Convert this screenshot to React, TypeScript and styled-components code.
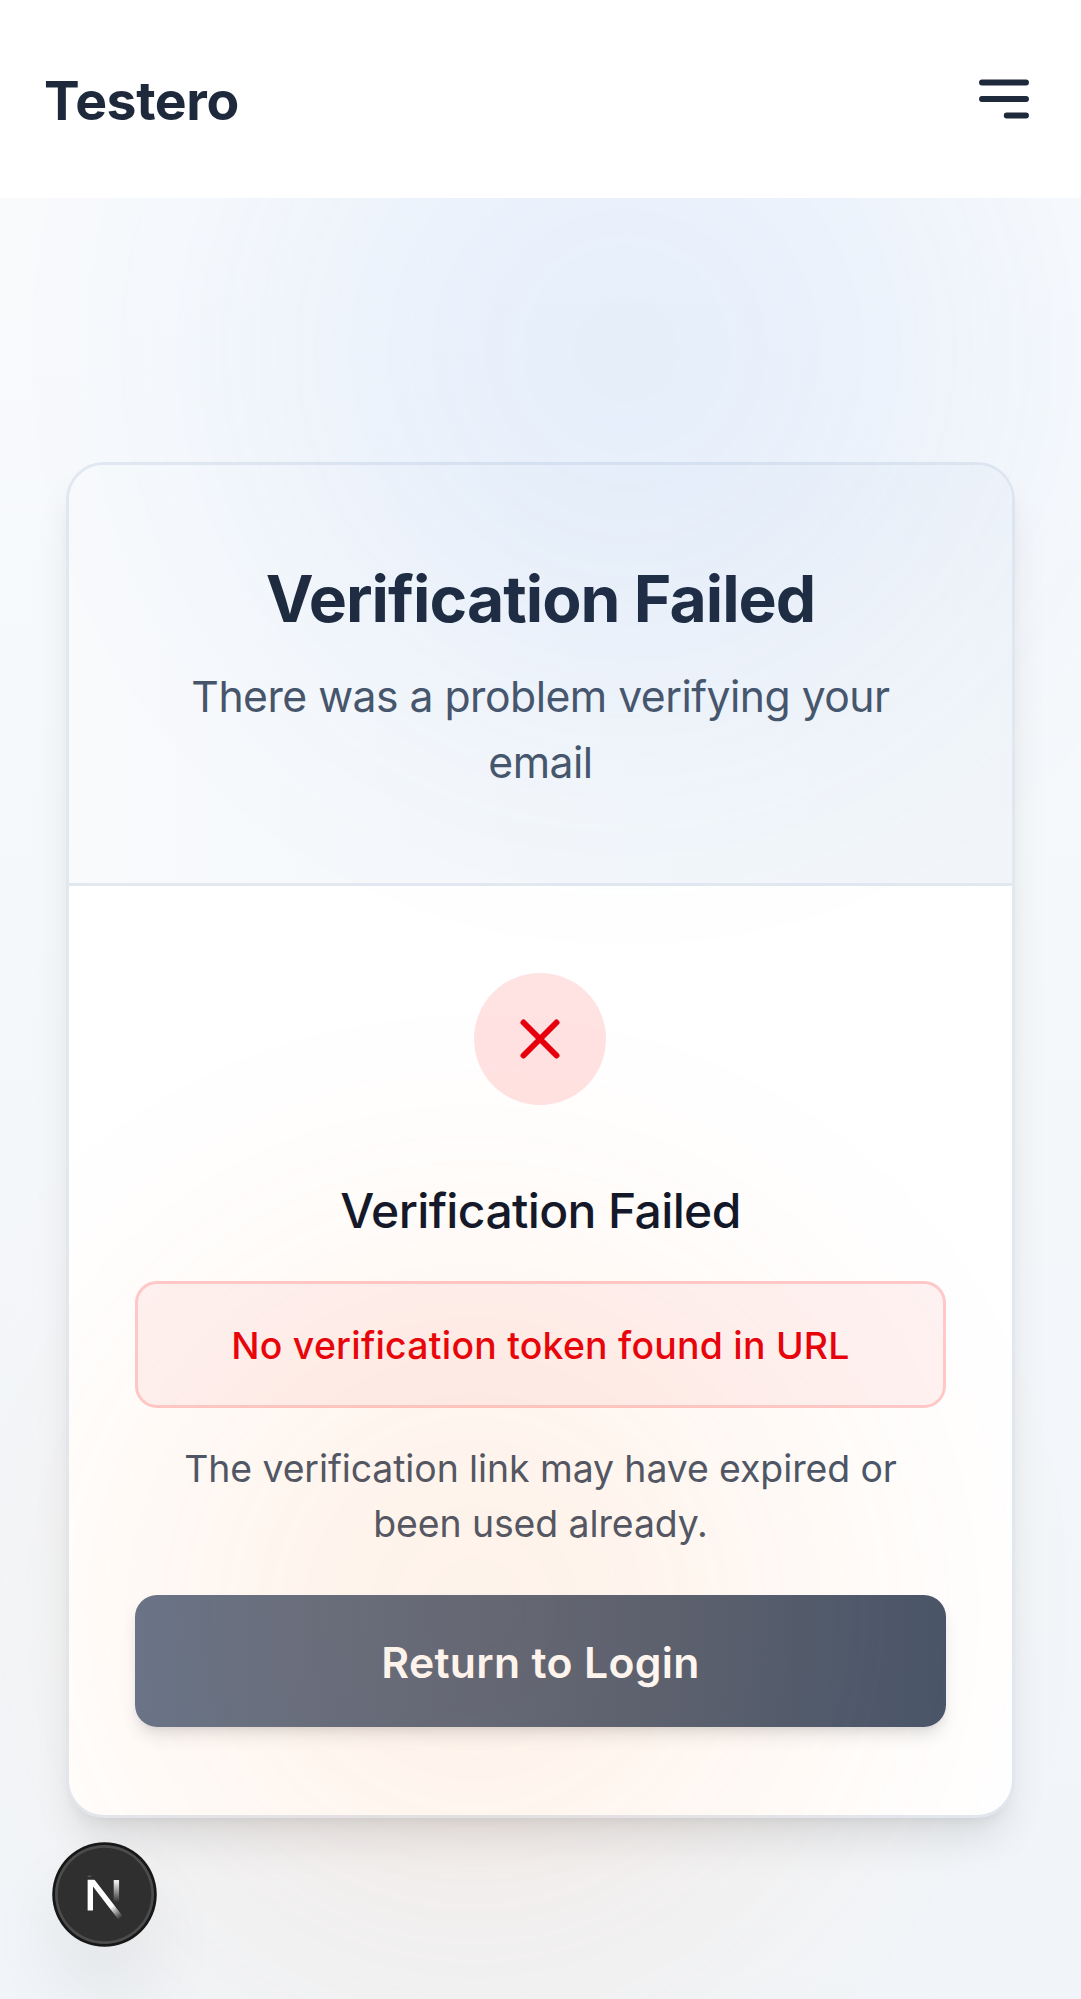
import React from "react";
import styled, { createGlobalStyle } from "styled-components";

const GlobalStyle = createGlobalStyle`
  *, *::before, *::after { box-sizing: border-box; }
  body {
    margin: 0;
    font-family: Inter, "Liberation Sans", sans-serif;
    background: #f8fafc;
    -webkit-font-smoothing: antialiased;
  }
  h1, h2, p { margin: 0; }
`;

const Page = styled.div`
  position: relative;
  min-height: 1999px;
  display: flex;
  flex-direction: column;
  overflow: hidden;
`;

const Nav = styled.header`
  position: relative;
  z-index: 2;
  height: 198px;
  padding: 0 44px;
  display: flex;
  align-items: center;
  justify-content: space-between;
  background: #ffffff;
`;

const Brand = styled.a`
  padding-top: 3px;
  font-size: 53.5px;
  line-height: 77px;
  font-weight: 700;
  letter-spacing: -0.4px;
  color: #1e293b;
  text-decoration: none;
`;

const MenuButton = styled.button`
  display: flex;
  padding: 0;
  border: 0;
  background: none;
  color: #1e293b;
`;

const Icon = styled.svg`
  width: 66px;
  height: 66px;
  fill: none;
  stroke: currentColor;
  stroke-width: 2.15;
  stroke-linecap: round;
  stroke-linejoin: round;
`;

const Main = styled.main`
  flex: 1;
  padding: 264px 66px 181px;
  background: linear-gradient(to bottom, #f8fafc, #f1f5f9);
`;

const Card = styled.section`
  border: 3px solid #e2e8f0;
  border-radius: 38px;
  overflow: hidden;
  background: #ffffff;
  text-align: center;
  box-shadow: 0 27.5px 41px -8px rgba(0, 0, 0, 0.1), 0 11px 16.5px -11px rgba(0, 0, 0, 0.1);
`;

const CardHeader = styled.div`
  height: 421px;
  padding: 88px 66px 0;
  border-bottom: 3px solid #e2e8f0;
  background: linear-gradient(to right, #f8fafc, #f1f5f9);
`;

const CardTitle = styled.h1`
  font-size: 64.2px;
  line-height: 91px;
  font-weight: 700;
  letter-spacing: -0.97px;
  color: #1e293b;
`;

const CardDescription = styled.p`
  margin-top: 20px;
  font-size: 42.7px;
  line-height: 66px;
  letter-spacing: -0.52px;
  color: #475569;
`;

const CardBody = styled.div`
  padding: 87px 66px 88px;
  display: flex;
  flex-direction: column;
  align-items: center;
`;

const StatusBadge = styled.div`
  width: 132px;
  height: 132px;
  margin-right: 1px;
  display: grid;
  place-items: center;
  border-radius: 50%;
  background: #ffe2e2;
  color: #e7000b;
`;

const StatusTitle = styled.h2`
  margin-top: 67px;
  font-size: 48px;
  line-height: 77px;
  font-weight: 500;
  letter-spacing: -0.63px;
  color: #0f172a;
`;

const Alert = styled.div`
  width: 100%;
  height: 127px;
  margin-top: 32px;
  padding-top: 2px;
  display: grid;
  place-items: center;
  border: 3px solid #ffc9c9;
  border-radius: 22px;
  background: #fef2f2;
  font-size: 37.4px;
  font-weight: 500;
  letter-spacing: 0.24px;
  color: #e7000b;
`;

const Note = styled.p`
  margin-top: 33px;
  font-size: 37.4px;
  line-height: 55px;
  letter-spacing: -0.08px;
  color: #475569;
`;

const PrimaryButton = styled.button`
  width: 100%;
  height: 132px;
  margin-top: 44px;
  padding: 3px 0 0;
  border: 0;
  border-radius: 22px;
  background: linear-gradient(to right, #64748b, #475569);
  box-shadow: 0 11px 16.5px -2.75px rgba(0, 0, 0, 0.1), 0 5.5px 11px -5.5px rgba(0, 0, 0, 0.1);
  font: 600 42.7px Inter, "Liberation Sans", sans-serif;
  letter-spacing: 0.33px;
  color: #ffffff;
`;

const Glow = styled.div<{ $x: number; $y: number; $color: string }>`
  position: absolute;
  left: ${(p) => p.$x - 352}px;
  top: ${(p) => p.$y - 352}px;
  width: 704px;
  height: 704px;
  border-radius: 50%;
  background: ${(p) => p.$color};
  opacity: 0.092;
  filter: blur(165px);
  pointer-events: none;
`;

const DevBadge = styled.div`
  position: absolute;
  z-index: 3;
  left: 55px;
  bottom: 55px;
  width: 99px;
  height: 99px;
  border-radius: 50%;
  background: #2f2f2f;
  box-shadow: 0 0 0 2.75px #171717, inset 0 0 0 2.75px rgba(255, 255, 255, 0.14),
    0 44px 88px -22px rgba(0, 0, 0, 0.24);
`;

const DevMark = styled.svg`
  display: block;
  width: 99px;
  height: 99px;
`;

function NextMark() {
  return (
    <DevMark viewBox="0 0 36 36" fill="none">
      <defs>
        <linearGradient id="diag" x1="9.95" y1="11.12" x2="14" y2="16.2" gradientUnits="userSpaceOnUse">
          <stop stopColor="#fff" />
          <stop offset="0.85" stopColor="#fff" stopOpacity="0" />
        </linearGradient>
        <linearGradient id="bar" x1="11.82" y1="1.4" x2="11.79" y2="9.62" gradientUnits="userSpaceOnUse">
          <stop stopColor="#fff" />
          <stop offset="1" stopColor="#fff" stopOpacity="0" />
        </linearGradient>
        <clipPath id="markClip">
          <rect x="0" y="1.4" width="18" height="18" />
        </clipPath>
      </defs>
      <g transform="translate(10.5 11.25)" strokeWidth="1.95">
        <path d="M13.3 15.2 L2.34 1 V12.6" stroke="url(#diag)" clipPath="url(#markClip)" />
        <path d="M11.825 1.5 V13.1" stroke="url(#bar)" />
        <path d="M1.4 0.1 h1.3" stroke="#fff" strokeOpacity="0.25" strokeWidth="0.4" />
      </g>
    </DevMark>
  );
}

export default function App() {
  return (
    <>
      <GlobalStyle />
      <Page>
        <Nav>
          <Brand>Testero</Brand>
          <MenuButton aria-label="Open menu">
            <Icon viewBox="0 0 24 24">
              <path d="M4 6h16M4 12h16M13 18h7" />
            </Icon>
          </MenuButton>
        </Nav>
        <Main>
          <Card>
            <CardHeader>
              <CardTitle>Verification Failed</CardTitle>
              <CardDescription>
                There was a problem verifying your
                <br />
                email
              </CardDescription>
            </CardHeader>
            <CardBody>
              <StatusBadge>
                <Icon viewBox="0 0 24 24">
                  <path d="M6 18L18 6M6 6l12 12" />
                </Icon>
              </StatusBadge>
              <StatusTitle>Verification Failed</StatusTitle>
              <Alert>No verification token found in URL</Alert>
              <Note>
                The verification link may have expired or
                <br />
                been used already.
              </Note>
              <PrimaryButton>Return to Login</PrimaryButton>
            </CardBody>
          </Card>
        </Main>
        <Glow $x={626} $y={350} $color="#3b82f6" />
        <Glow $x={474} $y={1610} $color="#f97316" />
        <DevBadge>
          <NextMark />
        </DevBadge>
      </Page>
    </>
  );
}
